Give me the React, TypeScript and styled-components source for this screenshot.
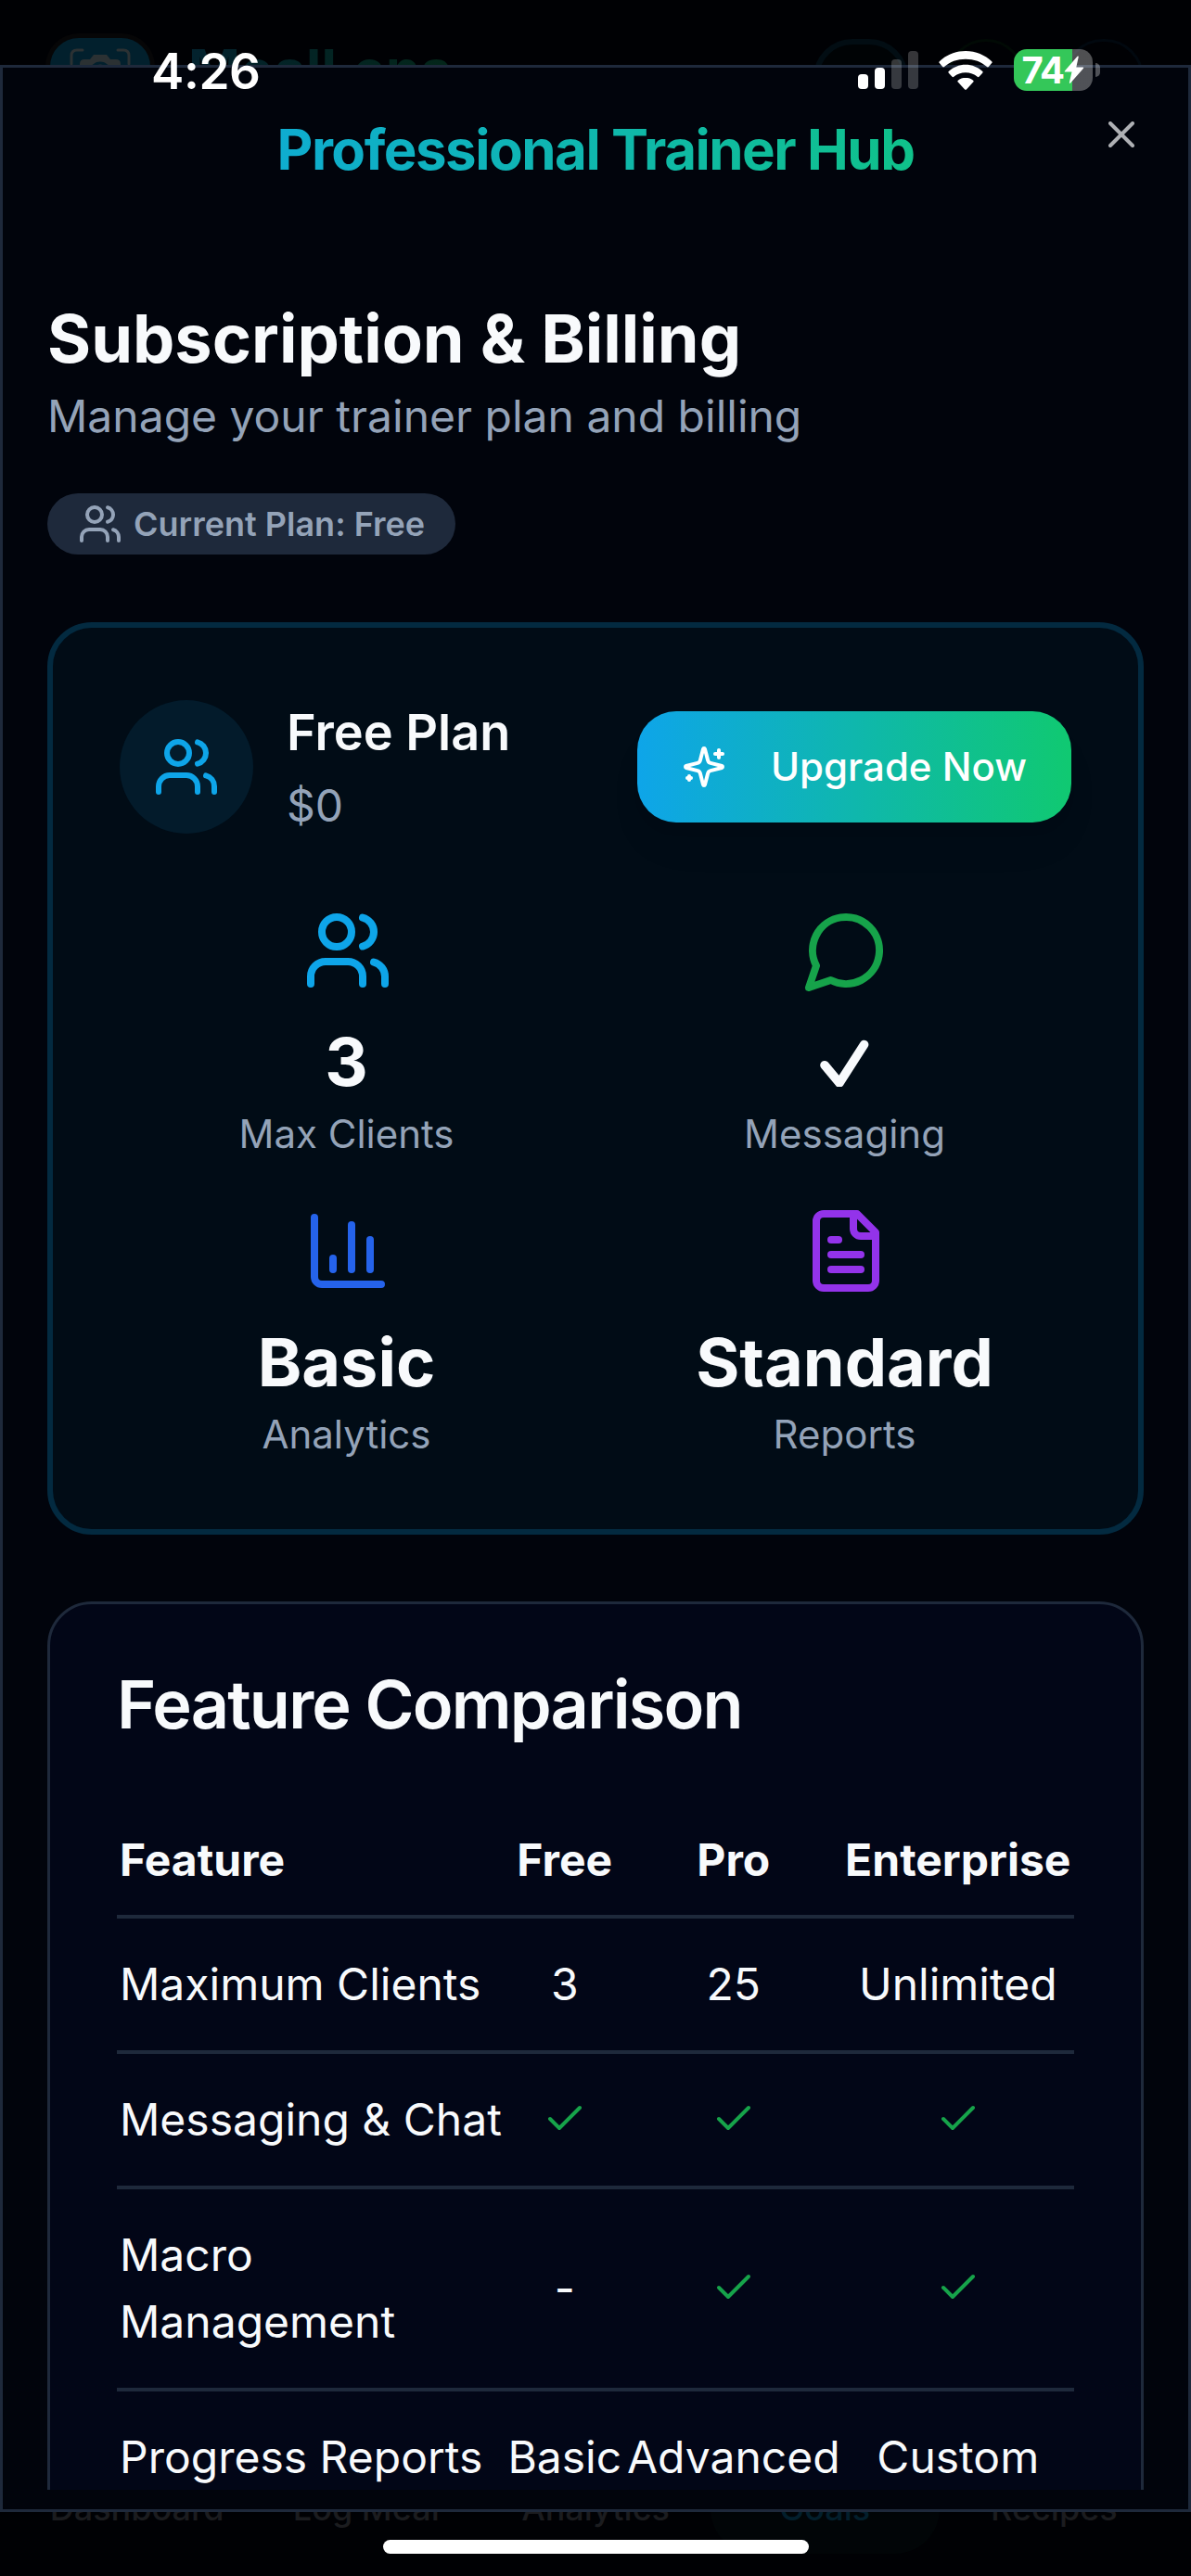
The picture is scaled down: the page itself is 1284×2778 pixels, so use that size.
import React from "react";
import styled, { createGlobalStyle } from "styled-components";

const GlobalStyle = createGlobalStyle`
  *, *::before, *::after { box-sizing: border-box; }
  body { margin: 0; background: #000; }
  h1, h2, h3, p { margin: 0; }
  button { border: 0; padding: 0; background: none; font: inherit; color: inherit; }
`;

const Screen = styled.main`
  position: relative;
  display: flex;
  flex-direction: column;
  justify-content: space-between;
  width: 1284px;
  height: 2778px;
  overflow: hidden;
  background: #000104;
  color: #f8fafc;
  font-family: Inter, "Liberation Sans", sans-serif;
  font-size: 48px;
  line-height: 72px;
`;

/* ---- dimmed page behind the dialog ---- */

const PageHeader = styled.header`
  display: flex;
  align-items: flex-start;
  justify-content: space-between;
  padding: 36px 51px 0 49px;
`;

const Brand = styled.div`
  display: flex;
  gap: 36px;
`;

const BrandMark = styled.div`
  display: flex;
  justify-content: center;
  width: 118px;
  height: 118px;
  padding-top: 10px;
  border: 5px solid #060607;
  border-radius: 36px;
  background: #02202d;
`;

const BrandName = styled.span`
  margin-top: -3px;
  font-size: 60px;
  font-weight: 700;
  line-height: 84px;
  background: linear-gradient(90deg, #03222e, #032619);
  background-clip: text;
  -webkit-background-clip: text;
  color: transparent;
`;

const PagePills = styled.div`
  display: flex;
  gap: 42px;
  padding-top: 6px;
`;

const PagePill = styled.div<{ $width: number; $line: number; $color: string; $fill?: string }>`
  width: ${(p) => p.$width}px;
  height: 108px;
  border: ${(p) => p.$line}px solid ${(p) => p.$color};
  border-radius: 42px;
  background: ${(p) => p.$fill ?? "transparent"};
`;

const PageNav = styled.nav`
  display: grid;
  grid-template-columns: repeat(5, 1fr);
  padding: 0 24px 24px;
`;

const NavItem = styled.span<{ $active?: boolean }>`
  display: flex;
  align-items: flex-end;
  justify-content: center;
  height: 150px;
  padding-bottom: 25px;
  border-radius: 48px;
  font-size: 36px;
  font-weight: 500;
  line-height: 48px;
  color: ${(p) => (p.$active ? "#031f2c" : "#1b1c1f")};
  background: ${(p) => (p.$active ? "#010507" : "transparent")};
`;

/* ---- system overlays ---- */

const StatusBar = styled.div`
  position: absolute;
  z-index: 3;
  top: 0;
  left: 0;
  right: 0;
  display: flex;
  align-items: center;
  justify-content: space-between;
  height: 98px;
  padding: 53px 98px 0 163px;
`;

const Clock = styled.span`
  padding-top: 2px;
  font-size: 53px;
  font-weight: 600;
  line-height: 48px;
  letter-spacing: -0.4px;
  color: #fff;
`;

const StatusIcons = styled.div`
  display: flex;
  align-items: center;
`;

const Signal = styled.div`
  display: flex;
  align-items: flex-end;
  gap: 7px;
  height: 41px;
  margin-right: 22px;
`;

const SignalBar = styled.i<{ $height: number; $on: boolean }>`
  width: 11px;
  height: ${(p) => p.$height}px;
  border-radius: 4px;
  background: ${(p) => (p.$on ? "#fff" : "rgba(255, 255, 255, 0.21)")};
`;

const Battery = styled.div`
  display: flex;
  align-items: center;
  gap: 3px;
  margin-left: 23px;
`;

const BatteryBody = styled.div`
  display: flex;
  align-items: center;
  width: 85px;
  height: 45px;
  padding-left: 9px;
  border-radius: 14px;
  background: linear-gradient(90deg, #34c759 63px, rgba(255, 255, 255, 0.31) 63px);
  color: #fff;
  font-size: 40px;
  font-weight: 700;
  line-height: 45px;
  letter-spacing: -1.4px;
`;

const BatteryCap = styled.i`
  width: 5.5px;
  height: 15px;
  border-radius: 0 8px 8px 0;
  background: rgba(255, 255, 255, 0.31);
`;

const HomeIndicator = styled.div`
  position: absolute;
  z-index: 3;
  left: 413px;
  bottom: 24px;
  width: 459px;
  height: 15px;
  border-radius: 8px;
  background: #fff;
`;

/* ---- dialog ---- */

const Dialog = styled.section`
  position: absolute;
  z-index: 2;
  top: 70px;
  left: 0;
  display: flex;
  flex-direction: column;
  width: 1284px;
  height: 2639px;
  padding: 46px 48px 21px;
  border: 3px solid #1e293b;
  background: #01040c;
`;

const DialogTitle = styled.h1`
  flex: none;
  font-size: 60px;
  font-weight: 700;
  line-height: 84px;
  letter-spacing: -0.025em;
  text-align: center;
  background: linear-gradient(90deg, #0ea5e9, #10c971);
  background-clip: text;
  -webkit-background-clip: text;
  color: transparent;
`;

const CloseButton = styled.button`
  position: absolute;
  top: 47.5px;
  right: 48px;
  display: flex;
  color: #f8fafc;
  opacity: 0.7;
`;

const DialogBody = styled.div`
  display: flex;
  flex: 1;
  flex-direction: column;
  gap: 72px;
  min-height: 0;
  margin-top: 113.6px;
  overflow: hidden;
`;

const Intro = styled.div`
  display: flex;
  flex: none;
  flex-direction: column;
  align-items: flex-start;
`;

const Heading = styled.h2`
  font-size: 72px;
  font-weight: 700;
  line-height: 96px;
`;

const Muted = styled.p`
  color: #94a3b8;
`;

const Badge = styled.span`
  display: flex;
  align-items: center;
  gap: 12px;
  height: 66px;
  margin-top: 47.5px;
  margin-bottom: 0.5px;
  padding: 0 33px 1px;
  border-radius: 33px;
  background: #1e293b;
  color: #94a3b8;
  font-size: 36px;
  font-weight: 600;
  line-height: 48px;
`;

const PlanCard = styled.section`
  display: flex;
  flex: none;
  flex-direction: column;
  gap: 72px;
  padding: 72px;
  border: 6px solid #032a40;
  border-radius: 48px;
  background: #010c16;
`;

const PlanTop = styled.div`
  display: flex;
  align-items: center;
  justify-content: space-between;
`;

const PlanInfo = styled.div`
  display: flex;
  align-items: center;
  gap: 36px;
`;

const PlanIcon = styled.div`
  display: grid;
  place-items: center;
  width: 144px;
  height: 144px;
  border-radius: 50%;
  background: #031b2b;
  color: #0ea5e9;
`;

const PlanName = styled.h3`
  padding-bottom: 3px;
  font-size: 54px;
  font-weight: 600;
  line-height: 81px;
`;

const UpgradeButton = styled.button`
  display: flex;
  align-items: center;
  gap: 48px;
  height: 120px;
  padding: 0 48px;
  border-radius: 42px;
  background: linear-gradient(90deg, #0ea5e9, #10c971);
  box-shadow: 0 30px 45px -9px rgba(0, 0, 0, 0.06), 0 12px 18px -12px rgba(0, 0, 0, 0.1);
  color: #fff;
  font-size: 42px;
  font-weight: 500;
  line-height: 60px;
`;

const Stats = styled.div`
  display: grid;
  grid-template-columns: 1fr 1fr;
  gap: 48px;
`;

const Stat = styled.div`
  display: flex;
  flex-direction: column;
  align-items: center;
`;

const StatIcon = styled.div<{ $color: string }>`
  display: flex;
  height: 96px;
  margin-bottom: 24px;
  padding-left: 3px;
  color: ${(p) => p.$color};
`;

const StatValue = styled.div`
  display: flex;
  align-items: center;
  height: 96px;
  font-size: 72px;
  font-weight: 700;
  line-height: 96px;
`;

const StatLabel = styled.div`
  color: #94a3b8;
  font-size: 42px;
  line-height: 60px;
`;

const CompareCard = styled.section`
  flex: none;
  padding: 72px;
  border: 3px solid #1e293b;
  border-radius: 48px;
  background: #020617;
`;

const CompareTitle = styled.h3`
  margin-bottom: 72px;
  font-size: 72px;
  font-weight: 600;
  line-height: 72px;
  letter-spacing: -0.025em;
`;

const Row = styled.div<{ $head?: boolean }>`
  display: grid;
  grid-template-columns: 417.5px 130.5px 233.5px 250.5px;
  align-items: center;
  justify-items: center;
  padding: ${(p) => (p.$head ? "24.6px 0 22.4px" : "35px 0 35px")};
  border-bottom: 4px solid #1e293b;
  font-weight: ${(p) => (p.$head ? 700 : 400)};
  white-space: nowrap;
`;

const Label = styled.div`
  justify-self: start;
  padding-left: 3px;
  white-space: pre-line;
`;

const CheckSlot = styled.span`
  display: flex;
  margin-bottom: 2px;
  padding-left: 1px;
  color: #16a34a;
`;

type IconProps = { size: number; children: React.ReactNode };

const Icon = ({ size, children }: IconProps) => (
  <svg
    width={size}
    height={size}
    viewBox="0 0 24 24"
    fill="none"
    stroke="currentColor"
    strokeWidth={2}
    strokeLinecap="round"
    strokeLinejoin="round"
  >
    {children}
  </svg>
);

const UsersIcon = ({ size }: { size: number }) => (
  <Icon size={size}>
    <path d="M16 21v-2a4 4 0 0 0-4-4H6a4 4 0 0 0-4 4v2" />
    <circle cx="9" cy="7" r="4" />
    <path d="M22 21v-2a4 4 0 0 0-3-3.87" />
    <path d="M16 3.13a4 4 0 0 1 0 7.75" />
  </Icon>
);

const MessageIcon = () => (
  <Icon size={96}>
    <path d="M7.9 20A9 9 0 1 0 4 16.1L2 22Z" />
  </Icon>
);

const ChartIcon = () => (
  <Icon size={96}>
    <path d="M3 3v16a2 2 0 0 0 2 2h16" />
    <path d="M18 17V9" />
    <path d="M13 17V5" />
    <path d="M8 17v-3" />
  </Icon>
);

const FileIcon = () => (
  <Icon size={96}>
    <path d="M15 2H6a2 2 0 0 0-2 2v16a2 2 0 0 0 2 2h12a2 2 0 0 0 2-2V7Z" />
    <path d="M14 2v4a2 2 0 0 0 2 2h4" />
    <path d="M10 9H8" />
    <path d="M16 13H8" />
    <path d="M16 17H8" />
  </Icon>
);

const SparklesIcon = () => (
  <Icon size={48}>
    <path d="M9.937 15.5A2 2 0 0 0 8.5 14.063l-6.135-1.582a.5.5 0 0 1 0-.962L8.5 9.936A2 2 0 0 0 9.937 8.5l1.582-6.135a.5.5 0 0 1 .963 0L14.063 8.5A2 2 0 0 0 15.5 9.937l6.135 1.581a.5.5 0 0 1 0 .964L15.5 14.063a2 2 0 0 0-1.437 1.437l-1.582 6.135a.5.5 0 0 1-.963 0z" />
    <path d="M20 3v4" />
    <path d="M22 5h-4" />
    <path d="M4 17v2" />
    <path d="M5 18H3" />
  </Icon>
);

const CheckIcon = () => (
  <CheckSlot>
    <Icon size={48}>
      <path d="M20 6 9 17l-5-5" />
    </Icon>
  </CheckSlot>
);

const BoldCheck = () => (
  <svg width="54" height="54" viewBox="0 0 54 54" fill="none">
    <path
      d="M5 30.700 21 49.800 47.600 8.500"
      stroke="#f8fafc"
      strokeWidth="9.6"
      strokeLinecap="round"
      strokeLinejoin="round"
    />
  </svg>
);

const CameraMark = () => (
  <svg width="66" height="60" viewBox="0 0 66 60" fill="none" stroke="#2b3133" strokeWidth="3">
    <path d="M2 18V9q0-6 6-6h6M52 3h6q6 0 6 6v9" strokeLinecap="round" />
    <path
      d="M16 13h6l4-5h14l4 5h6q5 0 5 5v24H11V18q0-5 5-5Z"
      fill="#2b3133"
      stroke="none"
    />
    <circle cx="33" cy="27" r="10" stroke="#02202d" />
  </svg>
);

const WifiGlyph = () => (
  <svg width="58" height="42" viewBox="0 0 58 42" fill="#fff">
    <path d="M29 0C18 0 8 4.300 .8 11.300q-.9.900 0 1.800L4.200 17q.9.900 1.800 0C12 11.600 20 8.700 29 8.700S46 11.600 52 17q.9.900 1.800 0l3.400-3.900q.9-.9 0-1.800C50 4.300 40 0 29 0Z" />
    <path d="M29 14.800c-7 0-13.300 2.700-18 7-.9.900-.9 1.300 0 2.200l3.500 3.800q.9.900 1.800 0c3.400-3 7.800-4.600 12.700-4.600s9.300 1.600 12.700 4.600q.9.900 1.800 0L47 24c.9-.9.900-1.300 0-2.200-4.700-4.300-11-7-18-7Z" />
    <path d="M29 28.800c-3.100 0-6 1.100-8.200 3q-.9.900 0 1.800l7.300 7.800q.9.900 1.800 0l7.300-7.800q.9-.9 0-1.800c-2.200-1.900-5.100-3-8.200-3Z" />
  </svg>
);

const BoltGlyph = () => (
  <svg width="22" height="31" viewBox="0 0 22 31" fill="#fff">
    <path d="M14.500.800.900 16.400q-.7 1.200.6 1.200h7L5.900 28.800q-.2 1.900 1.200.7L21 13.700q.7-1.200-.7-1.200h-7L15.700 1.500q.2-1.700-1.200-.7Z" />
  </svg>
);

const navItems = ["Dashboard", "Log Meal", "Analytics", "Goals", "Recipes"];

const signal = [
  { height: 16, on: true },
  { height: 23, on: true },
  { height: 32, on: false },
  { height: 41, on: false },
];

const stats = [
  { icon: <UsersIcon size={96} />, color: "#0ea5e9", value: "3", label: "Max Clients" },
  { icon: <MessageIcon />, color: "#16a34a", value: <BoldCheck />, label: "Messaging" },
  { icon: <ChartIcon />, color: "#2563eb", value: "Basic", label: "Analytics" },
  { icon: <FileIcon />, color: "#9333ea", value: "Standard", label: "Reports" },
];

type Cell = string | true;

const features: { label: string; cells: Cell[] }[] = [
  { label: "Maximum Clients", cells: ["3", "25", "Unlimited"] },
  { label: "Messaging & Chat", cells: [true, true, true] },
  { label: "Macro\nManagement", cells: ["-", true, true] },
  { label: "Progress Reports", cells: ["Basic", "Advanced", "Custom"] },
];

export default function App() {
  return (
    <Screen>
      <GlobalStyle />

      <PageHeader>
        <Brand>
          <BrandMark>
            <CameraMark />
          </BrandMark>
          <BrandName>MealLens</BrandName>
        </Brand>
        <PagePills>
          <PagePill $width={102} $line={6} $color="#020d13" $fill="#000305" />
          <PagePill $width={84} $line={3} $color="#010a05" />
          <PagePill $width={86} $line={3} $color="#01080f" />
        </PagePills>
      </PageHeader>

      <PageNav>
        {navItems.map((item) => (
          <NavItem key={item} $active={item === "Goals"}>
            {item}
          </NavItem>
        ))}
      </PageNav>

      <Dialog>
        <DialogTitle>Professional Trainer Hub</DialogTitle>
        <CloseButton aria-label="Close">
          <Icon size={48}>
            <path d="M18 6 6 18" />
            <path d="m6 6 12 12" />
          </Icon>
        </CloseButton>

        <DialogBody>
          <Intro>
            <Heading>Subscription &amp; Billing</Heading>
            <Muted>Manage your trainer plan and billing</Muted>
            <Badge>
              <UsersIcon size={48} />
              Current Plan: Free
            </Badge>
          </Intro>

          <PlanCard>
            <PlanTop>
              <PlanInfo>
                <PlanIcon>
                  <UsersIcon size={72} />
                </PlanIcon>
                <div>
                  <PlanName>Free Plan</PlanName>
                  <Muted>$0</Muted>
                </div>
              </PlanInfo>
              <UpgradeButton>
                <SparklesIcon />
                Upgrade Now
              </UpgradeButton>
            </PlanTop>
            <Stats>
              {stats.map((s) => (
                <Stat key={s.label}>
                  <StatIcon $color={s.color}>{s.icon}</StatIcon>
                  <StatValue>{s.value}</StatValue>
                  <StatLabel>{s.label}</StatLabel>
                </Stat>
              ))}
            </Stats>
          </PlanCard>

          <CompareCard>
            <CompareTitle>Feature Comparison</CompareTitle>
            <Row $head>
              <Label>Feature</Label>
              <span>Free</span>
              <span>Pro</span>
              <span>Enterprise</span>
            </Row>
            {features.map((f) => (
              <Row key={f.label}>
                <Label>{f.label}</Label>
                {f.cells.map((cell, i) =>
                  cell === true ? <CheckIcon key={i} /> : <span key={i}>{cell}</span>
                )}
              </Row>
            ))}
          </CompareCard>
        </DialogBody>
      </Dialog>

      <StatusBar>
        <Clock>4:26</Clock>
        <StatusIcons>
          <Signal>
            {signal.map((bar) => (
              <SignalBar key={bar.height} $height={bar.height} $on={bar.on} />
            ))}
          </Signal>
          <WifiGlyph />
          <Battery>
            <BatteryBody>
              74
              <BoltGlyph />
            </BatteryBody>
            <BatteryCap />
          </Battery>
        </StatusIcons>
      </StatusBar>
      <HomeIndicator />
    </Screen>
  );
}
